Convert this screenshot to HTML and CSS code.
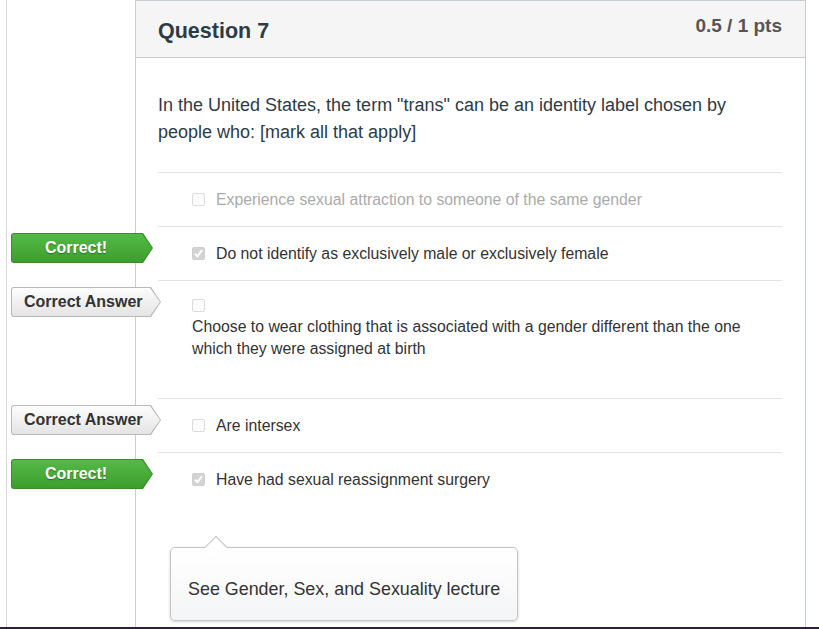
FILE: index.html
```html
<!DOCTYPE html>
<html lang="en">
<head>
    <meta charset="UTF-8">
    <meta name="viewport" content="width=device-width, initial-scale=1.0">
    <title>Question 7</title>
    <link rel="stylesheet" href="styles.css">
</head>
<body>
<div class="page">
    <div class="card">
        <div class="card-header">
            <h2 class="question-title">Question 7</h2>
            <span class="points">0.5 / 1 pts</span>
        </div>
        <div class="card-body">
            <p class="question-text">In the United States, the term "trans" can be an identity label chosen by people who: [mark all that apply]</p>

            <div class="answers">
                <div class="answer faded">
                    <span class="check"></span>
                    <span class="answer-text">Experience sexual attraction to someone of the same gender</span>
                </div>
                <div class="answer">
                    <span class="flag flag-correct">Correct!</span>
                    <span class="check checked">
                        <svg width="11" height="11" viewBox="0 0 11 11"><path d="M2 5.8 L4.4 8.3 L9 2.2" fill="none" stroke="#fff" stroke-width="2"/></svg>
                    </span>
                    <span class="answer-text">Do not identify as exclusively male or exclusively female</span>
                </div>
                <div class="answer answer-stacked">
                    <span class="flag flag-answer">Correct Answer</span>
                    <div class="check-line"><span class="check"></span></div>
                    <div class="answer-text">Choose to wear clothing that is associated with a gender different than the one which they were assigned at birth</div>
                </div>
                <div class="answer">
                    <span class="flag flag-answer">Correct Answer</span>
                    <span class="check"></span>
                    <span class="answer-text">Are intersex</span>
                </div>
                <div class="answer">
                    <span class="flag flag-correct">Correct!</span>
                    <span class="check checked">
                        <svg width="11" height="11" viewBox="0 0 11 11"><path d="M2 5.8 L4.4 8.3 L9 2.2" fill="none" stroke="#fff" stroke-width="2"/></svg>
                    </span>
                    <span class="answer-text">Have had sexual reassignment surgery</span>
                </div>
            </div>

            <div class="comment">
                See Gender, Sex, and Sexuality lecture
            </div>
        </div>
    </div>
</div>
</body>
</html>
```

FILE: styles.css
```css
body, html {
    margin: 0;
    height: 100%;
    overflow: hidden;
}

body {
    box-sizing: border-box;
    border-bottom: 2px solid #2e1f40;
    font-family: "Liberation Sans", Arial, sans-serif;
    color: #2d3b45;
    background-color: #fff;
}

.page {
    height: 100%;
    margin-left: 6px;
    padding-left: 128px;
    border-left: 1px solid #d6d6d6;
}

.card {
    box-sizing: border-box;
    width: 671px;
    height: 100%;
    border: 1px solid #c7cdd1;
    border-bottom: none;
}

.card-header {
    box-sizing: border-box;
    height: 57px;
    display: flex;
    justify-content: space-between;
    align-items: flex-start;
    padding: 0 23px 0 22px;
    background-color: #f5f5f5;
    border-bottom: 1px solid #c7cdd1;
}

.question-title {
    margin: 18px 0 0;
    font-size: 21.5px;
    line-height: 24px;
    font-weight: bold;
    color: #2d3b45;
}

.points {
    margin-top: 14px;
    font-size: 19px;
    line-height: 22px;
    font-weight: bold;
    color: #555;
}

.card-body {
    padding: 0 23px 0 22px;
}

.question-text {
    margin: 34px 0 26px;
    font-size: 18px;
    line-height: 27px;
}

.answer {
    position: relative;
    display: flex;
    align-items: center;
    padding: 16px 0 15px 34px;
    border-top: 1px solid #e2e2e2;
    font-size: 15.8px;
    line-height: 22px;
    color: #333;
}

.answer.faded {
    color: #ababab;
}

.answer .check {
    margin-top: -1px;
}

.answer-stacked {
    display: block;
    padding-top: 15px;
    padding-bottom: 38px;
}

.check-line {
    height: 20px;
    padding-top: 4px;
    box-sizing: border-box;
}

.check {
    box-sizing: border-box;
    display: inline-flex;
    align-items: center;
    justify-content: center;
    width: 13px;
    height: 13px;
    margin-right: 11px;
    border: 1px solid #dcdcdc;
    border-radius: 2px;
    background-color: #fcfcfc;
}

.check-line .check {
    display: block;
}

.check.checked {
    border-color: #cfcfcf;
    background-color: #d3d3d3;
}

.check svg {
    display: block;
}

.flag {
    position: absolute;
    top: 6px;
    left: -147px;
    box-sizing: border-box;
    height: 30px;
    font-size: 16px;
    line-height: 30px;
    font-weight: bold;
    clip-path: polygon(0 0, calc(100% - 10px) 0, 100% 50%, calc(100% - 10px) 100%, 0 100%);
    border-radius: 3px 0 0 3px;
}

.flag::before {
    content: "";
    position: absolute;
    top: 1px;
    left: 1px;
    right: 1px;
    bottom: 1px;
    z-index: -1;
    clip-path: polygon(0 0, calc(100% - 10px) 0, 100% 50%, calc(100% - 10px) 100%, 0 100%);
    border-radius: 2px 0 0 2px;
}

.flag-correct {
    width: 142px;
    padding-right: 12px;
    text-align: center;
    color: #fff;
    text-shadow: 0 1px 1px rgba(0, 0, 0, 0.35);
    background-color: #3b8a2e;
    z-index: 1;
}

.flag-correct::before {
    background: linear-gradient(#55b948, #3b9e2d);
}

.flag-answer {
    width: 150px;
    padding-left: 13px;
    color: #333;
    background-color: #b9b9b9;
    z-index: 1;
}

.flag-answer::before {
    background: linear-gradient(#fdfdfd, #e4e4e4);
}

.comment {
    position: relative;
    box-sizing: border-box;
    width: 348px;
    margin: 41px 0 0 12px;
    padding: 30px 10px 20px 17px;
    font-size: 17.9px;
    line-height: 22px;
    color: #333;
    background: linear-gradient(#fff, #f4f5f6);
    border: 1px solid #c4c4c4;
    border-radius: 5px;
    box-shadow: 0 1px 3px rgba(0, 0, 0, 0.18);
}

.comment::before {
    content: "";
    position: absolute;
    top: -9px;
    left: 37px;
    width: 15px;
    height: 15px;
    background-color: #fff;
    border-top: 1px solid #c4c4c4;
    border-left: 1px solid #c4c4c4;
    transform: rotate(45deg);
}
```
